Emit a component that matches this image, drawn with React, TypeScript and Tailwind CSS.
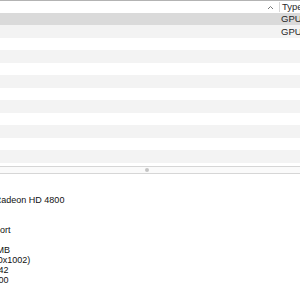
import React from 'react';

const rows = [
  { type: 'GPU' },
  { type: 'GPU' },
  ...Array.from({ length: 11 }, () => ({ type: '' })),
];

const details = [
  'ATI Radeon HD 4800',
  'GPU',
  'PCIe',
  'Support',
  'x16',
  '512 MB',
  'ATI (0x1002)',
  '0x9442',
  '0x0000',
];

const App: React.FC = () => {
  return (
    <div className="w-[300px] h-[300px] overflow-hidden bg-white flex flex-col font-['Liberation_Sans',Arial,sans-serif]">
      {/* list */}
      <div className="h-[165.5px] overflow-hidden flex flex-col shrink-0">
        <div className="h-[12.5px] shrink-0 border-t border-[#b3b3b3] bg-white flex items-center">
          <div className="flex-1" />
          <svg width="7" height="5" viewBox="0 0 7 5" className="mr-[5px] mt-[1px]">
            <polyline points="1,4 3.5,1.5 6,4" fill="none" stroke="#777" strokeWidth="1" />
          </svg>
          <div className="w-px h-[10px] bg-[#d8d8d8]" />
          <div className="w-[20px] pl-[2px] text-[9.5px] leading-none text-[#2a2a2a] whitespace-nowrap">Type</div>
        </div>
        {rows.map((row, idx) => (
          <div
            key={idx}
            className={`h-[12.5px] shrink-0 flex items-center ${
              idx === 0 ? 'bg-[#dadada]' : idx % 2 === 1 ? 'bg-[#f3f3f3]' : 'bg-white'
            }`}
          >
            <div className="flex-1" />
            <div className="w-[19px] text-[9.5px] leading-none text-[#1e1e1e] whitespace-nowrap">{row.type}</div>
          </div>
        ))}
      </div>

      {/* split view divider */}
      <div className="h-[8.5px] shrink-0 border-y border-[#d6d6d6] bg-[#fafafa] flex items-center justify-center">
        <div className="w-[4px] h-[4px] rounded-full bg-[#c4c4c4] ml-[-6px]" />
      </div>

      {/* detail pane */}
      <div className="flex-1 bg-white pt-[21px]">
        {details.map((line, idx) => (
          <div key={idx} className="ml-[-21px] text-[9px] leading-[10px] text-[#111] whitespace-nowrap">
            {line}
          </div>
        ))}
      </div>
    </div>
  );
};

export default App;
